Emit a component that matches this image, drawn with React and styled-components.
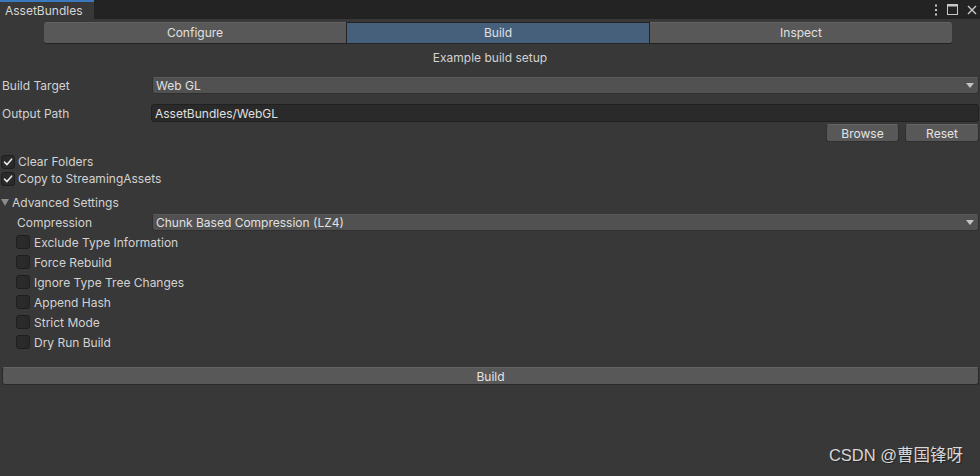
import React from "react";
import styled, { createGlobalStyle } from "styled-components";

const Global = createGlobalStyle`
  html, body { margin: 0; padding: 0; background: #383838; }
  body { font-family: Inter, "Noto Sans", sans-serif; font-size: 12px; color: #d2d2d2; }
  * { box-sizing: border-box; }
`;

const Window = styled.div`
  position: relative;
  width: 980px;
  height: 476px;
  background: #383838;
  overflow: hidden;
`;

const TabBar = styled.div`
  display: flex;
  align-items: stretch;
  height: 19px;
  background: #232323;
`;

const Tab = styled.div`
  width: 94px;
  background: #383838;
  border-top: 2px solid #3a79bb;
  padding-left: 5px;
  display: flex;
  align-items: center;
  font-size: 12px;
  color: #d6d6d6;
`;

const TabIcons = styled.div`
  margin-left: auto;
  display: flex;
  align-items: center;
  gap: 9px;
  padding-right: 3px;
  color: #c8c8c8;
`;

const Toolbar = styled.div`
  display: flex;
  margin: 3px 28px 0 44px;
  height: 22px;
  gap: 1px;
  background: #232323;
  border-radius: 3px;
`;

const ToolButton = styled.div`
  flex: 1;
  display: flex;
  align-items: center;
  justify-content: center;
  padding-bottom: 1px;
  background: ${(p) => (p.$active ? "#46607c" : "#585858")};
  color: #e0e0e0;
  border-top: 1px solid ${(p) => (p.$active ? "#222" : "#636363")};
  border-bottom: 1px solid #242424;
  &:first-child { border-radius: 3px 0 0 3px; }
  &:last-child { border-radius: 0 3px 3px 0; }
`;

const Subtitle = styled.div`
  text-align: center;
  height: 16px;
  line-height: 16px;
  margin-top: 6px;
  color: #d2d2d2;
`;

const Field = styled.div`
  display: flex;
  align-items: center;
  height: ${(p) => p.$h || 17}px;
  margin-top: ${(p) => p.$mt || 0}px;
  padding-left: ${(p) => p.$indent || 2}px;
  padding-right: 1px;
`;

const Label = styled.div`
  width: ${(p) => 152 - (p.$indent || 2)}px;
  flex-shrink: 0;
  color: #d2d2d2;
`;

const Dropdown = styled.div`
  flex: 1;
  height: 17px;
  display: flex;
  align-items: center;
  padding-left: 3px;
  padding-right: 4px;
  background: #515151;
  border: 1px solid #303030;
  border-top-color: #5a5a5a;
  border-radius: 3px;
  color: #e0e0e0;
`;

const Caret = styled.span`
  margin-left: auto;
  width: 0;
  height: 0;
  border-left: 4px solid transparent;
  border-right: 4px solid transparent;
  border-top: 5px solid #c4c4c4;
`;

const TextField = styled.div`
  flex: 1;
  height: 18px;
  display: flex;
  align-items: center;
  padding-left: 3px;
  margin-left: -1px;
  background: #2a2a2a;
  border: 1px solid #212121;
  border-radius: 3px;
  color: #e0e0e0;
`;

const ButtonRow = styled.div`
  display: flex;
  justify-content: flex-end;
  gap: 6px;
  margin-top: 2px;
  padding-right: 1px;
`;

const SmallButton = styled.div`
  width: ${(p) => p.$w}px;
  height: 18px;
  display: flex;
  align-items: center;
  justify-content: center;
  background: #585858;
  border: 1px solid #303030;
  border-top-color: #656565;
  border-radius: 3px;
  color: #e4e4e4;
`;

const CheckRow = styled.div`
  display: flex;
  align-items: center;
  height: ${(p) => p.$h || 17}px;
  padding-left: ${(p) => p.$indent || 1}px;
  gap: ${(p) => p.$gap || 3}px;
  margin-top: ${(p) => p.$mt || 0}px;
  color: #d2d2d2;
`;

const Box = styled.span`
  width: 14px;
  height: 14px;
  border-radius: 3px;
  background: #2a2a2a;
  border: 1px solid #1e1e1e;
  display: flex;
  align-items: center;
  justify-content: center;
`;

const Foldout = styled.div`
  display: flex;
  align-items: center;
  height: 16px;
  margin-top: 7px;
  padding-left: 1px;
  gap: 3px;
  color: #d2d2d2;
`;

const Triangle = styled.span`
  width: 0;
  height: 0;
  border-left: 4px solid transparent;
  border-right: 4px solid transparent;
  border-top: 7px solid #8a8a8a;
`;

const BigButton = styled.div`
  margin: 15px 1px 0 2px;
  height: 18px;
  display: flex;
  align-items: center;
  justify-content: center;
  background: #585858;
  border: 1px solid #2a2a2a;
  border-top-color: #636363;
  border-radius: 3px;
  color: #e4e4e4;
`;

const Watermark = styled.div`
  position: absolute;
  right: 17px;
  bottom: 10px;
  font-family: "Liberation Sans", "Noto Sans CJK SC", sans-serif;
  font-size: 16.5px;
  color: #d8d8d8;
  text-shadow: 1px 1px 1px #222;
`;

const Check = () => (
  <svg width="10" height="10" viewBox="0 0 10 10">
    <path d="M1.5 5.2 L4 7.6 L8.6 2.2" fill="none" stroke="#e8e8e8" strokeWidth="1.6" strokeLinecap="round" strokeLinejoin="round" />
  </svg>
);

const Checkbox = ({ checked }) => <Box>{checked && <Check />}</Box>;

export default function App() {
  const options = [
    "Exclude Type Information",
    "Force Rebuild",
    "Ignore Type Tree Changes",
    "Append Hash",
    "Strict Mode",
    "Dry Run Build",
  ];
  return (
    <Window>
      <Global />
      <TabBar>
        <Tab>AssetBundles</Tab>
        <TabIcons>
          <svg width="4" height="12" viewBox="0 0 4 12">
            <rect x="1" y="0.5" width="2" height="2" fill="#c8c8c8" />
            <rect x="1" y="5" width="2" height="2" fill="#c8c8c8" />
            <rect x="1" y="9.5" width="2" height="2" fill="#c8c8c8" />
          </svg>
          <svg width="11" height="11" viewBox="0 0 11 11">
            <rect x="0.5" y="0.5" width="10" height="10" fill="none" stroke="#c8c8c8" />
            <rect x="0.5" y="0.5" width="10" height="2" fill="#c8c8c8" />
          </svg>
          <svg width="10" height="10" viewBox="0 0 10 10">
            <path d="M1 1 L9 9 M9 1 L1 9" stroke="#c8c8c8" strokeWidth="1.4" />
          </svg>
        </TabIcons>
      </TabBar>
      <Toolbar>
        <ToolButton>Configure</ToolButton>
        <ToolButton $active>Build</ToolButton>
        <ToolButton>Inspect</ToolButton>
      </Toolbar>
      <Subtitle>Example build setup</Subtitle>
      <Field $mt={11}>
        <Label>Build Target</Label>
        <Dropdown>
          Web GL
          <Caret />
        </Dropdown>
      </Field>
      <Field $mt={10} $h={18}>
        <Label>Output Path</Label>
        <TextField>AssetBundles/WebGL</TextField>
      </Field>
      <ButtonRow>
        <SmallButton $w={73}>Browse</SmallButton>
        <SmallButton $w={74}>Reset</SmallButton>
      </ButtonRow>
      <CheckRow $mt={11}>
        <Checkbox checked />
        Clear Folders
      </CheckRow>
      <CheckRow>
        <Checkbox checked />
        Copy to StreamingAssets
      </CheckRow>
      <Foldout>
        <Triangle />
        Advanced Settings
      </Foldout>
      <Field $mt={4} $indent={17}>
        <Label $indent={17}>Compression</Label>
        <Dropdown>
          Chunk Based Compression (LZ4)
          <Caret />
        </Dropdown>
      </Field>
      {options.map((o, i) => (
        <CheckRow key={o} $h={20} $indent={16} $gap={4} $mt={i === 0 ? 1 : 0}>
          <Checkbox />
          {o}
        </CheckRow>
      ))}
      <BigButton>Build</BigButton>
      <Watermark>CSDN @曹国锋呀</Watermark>
    </Window>
  );
}
